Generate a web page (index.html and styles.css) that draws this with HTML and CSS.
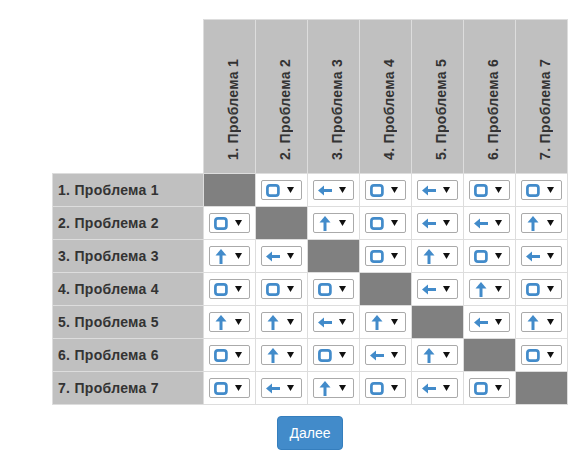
FILE: index.html
```html
<!DOCTYPE html>
<html>
<head>
<meta charset="utf-8">
<link rel="stylesheet" href="styles.css">
</head>
<body>
<div class="page">
<table class="matrix">
<colgroup>
<col class="c-head">
<col class="c-item"><col class="c-item"><col class="c-item"><col class="c-item"><col class="c-item"><col class="c-item"><col class="c-item">
</colgroup>
<thead>
<tr>
<th class="corner"></th>
<th class="col"><span>1. Проблема 1</span></th>
<th class="col"><span>2. Проблема 2</span></th>
<th class="col"><span>3. Проблема 3</span></th>
<th class="col"><span>4. Проблема 4</span></th>
<th class="col"><span>5. Проблема 5</span></th>
<th class="col"><span>6. Проблема 6</span></th>
<th class="col"><span>7. Проблема 7</span></th>
</tr>
</thead>
<tbody id="body"></tbody>
</table>
<div class="actions"><button class="btn">Далее</button></div>
</div>
<script src="script.js"></script>
</body>
</html>
```
FILE: script.js
```js
var data = [
  "x s l s l s s",
  "s x u s l l u",
  "u l x s u s l",
  "s s s x l u s",
  "u u l u x l u",
  "s u s l u x s",
  "s l u s l s x"
];
var icons = {
  s: '<svg class="ic" width="14" height="13" viewBox="0 0 14 13"><rect x="1.4" y="1.4" width="11" height="10.2" rx="2.6" fill="none" stroke="#428bca" stroke-width="2.7"/></svg>',
  l: '<svg class="ic" width="14" height="13" viewBox="0 0 14 13"><polygon points="0,6.5 6,1.5 6,11.5" fill="#428bca"/><rect x="5" y="5" width="9" height="3" fill="#428bca"/></svg>',
  u: '<svg class="ic ic-up" width="12" height="15" viewBox="0 0 12 15"><polygon points="6,0 11.5,6.5 0.5,6.5" fill="#428bca"/><rect x="4.5" y="5.5" width="3" height="9.5" fill="#428bca"/></svg>'
};
var caret = '<svg class="caret" width="7" height="6" viewBox="0 0 7 6"><polygon points="0,0 7,0 3.5,6" fill="#111"/></svg>';
var html = "";
data.forEach(function (row, i) {
  html += '<tr><th class="rowh">' + (i + 1) + '. Проблема ' + (i + 1) + '</th>';
  row.split(" ").forEach(function (c) {
    if (c === "x") {
      html += '<td class="diag"></td>';
    } else {
      html += '<td class="cell"><div class="sel">' + icons[c] + caret + '</div></td>';
    }
  });
  html += '</tr>';
});
document.getElementById("body").innerHTML = html;
```
FILE: styles.css
```css
html, body {
  margin: 0;
  padding: 0;
  background: #fff;
}
body {
  font-family: "Liberation Sans", Arial, sans-serif;
  color: #333;
}
.page {
  padding: 19px 0 0 52px;
  width: 516px;
}
.matrix {
  border-collapse: collapse;
  table-layout: fixed;
  width: 516px;
}
.c-head {
  width: 151px;
}
.c-item {
  width: 52px;
}
.matrix th, .matrix td {
  border: 1px solid #ddd;
  padding: 0;
}
.corner {
  border: none !important;
  background: #fff;
}
.col {
  height: 144px;
  background: #c0c0c0;
  vertical-align: bottom;
  text-align: left;
  padding: 0 0 9px 21px !important;
}
.col span {
  display: inline-block;
  writing-mode: vertical-rl;
  transform: rotate(180deg);
  font-size: 14px;
  letter-spacing: 0.3px;
  font-weight: bold;
  color: #333;
  white-space: nowrap;
}
.rowh {
  height: 32px;
  background: #c0c0c0;
  text-align: left;
  padding-left: 5px !important;
  font-size: 14px;
  letter-spacing: 0.3px;
  font-weight: bold;
  color: #333;
  white-space: nowrap;
}
.diag {
  background: #808080;
}
.cell {
  background: #fff;
}
.sel {
  box-sizing: border-box;
  width: 41px;
  height: 20px;
  margin: 0 auto;
  border: 1px solid #aaa;
  border-radius: 2px;
  background: #fff;
  display: flex;
  align-items: center;
  padding-left: 4px;
}
.ic {
  display: block;
  flex: none;
}
.ic-up {
  margin-left: 1px;
  margin-right: 1px;
}
.caret {
  display: block;
  margin-left: auto;
  margin-right: 7px;
}
.actions {
  display: flex;
  justify-content: center;
  padding-top: 11px;
}
.btn {
  font-family: "Liberation Sans", Arial, sans-serif;
  font-size: 14px;
  color: #fff;
  background: #428bca;
  border: 1px solid #357ebd;
  border-radius: 4px;
  width: 66px;
  height: 34px;
  padding: 0;
}
```
